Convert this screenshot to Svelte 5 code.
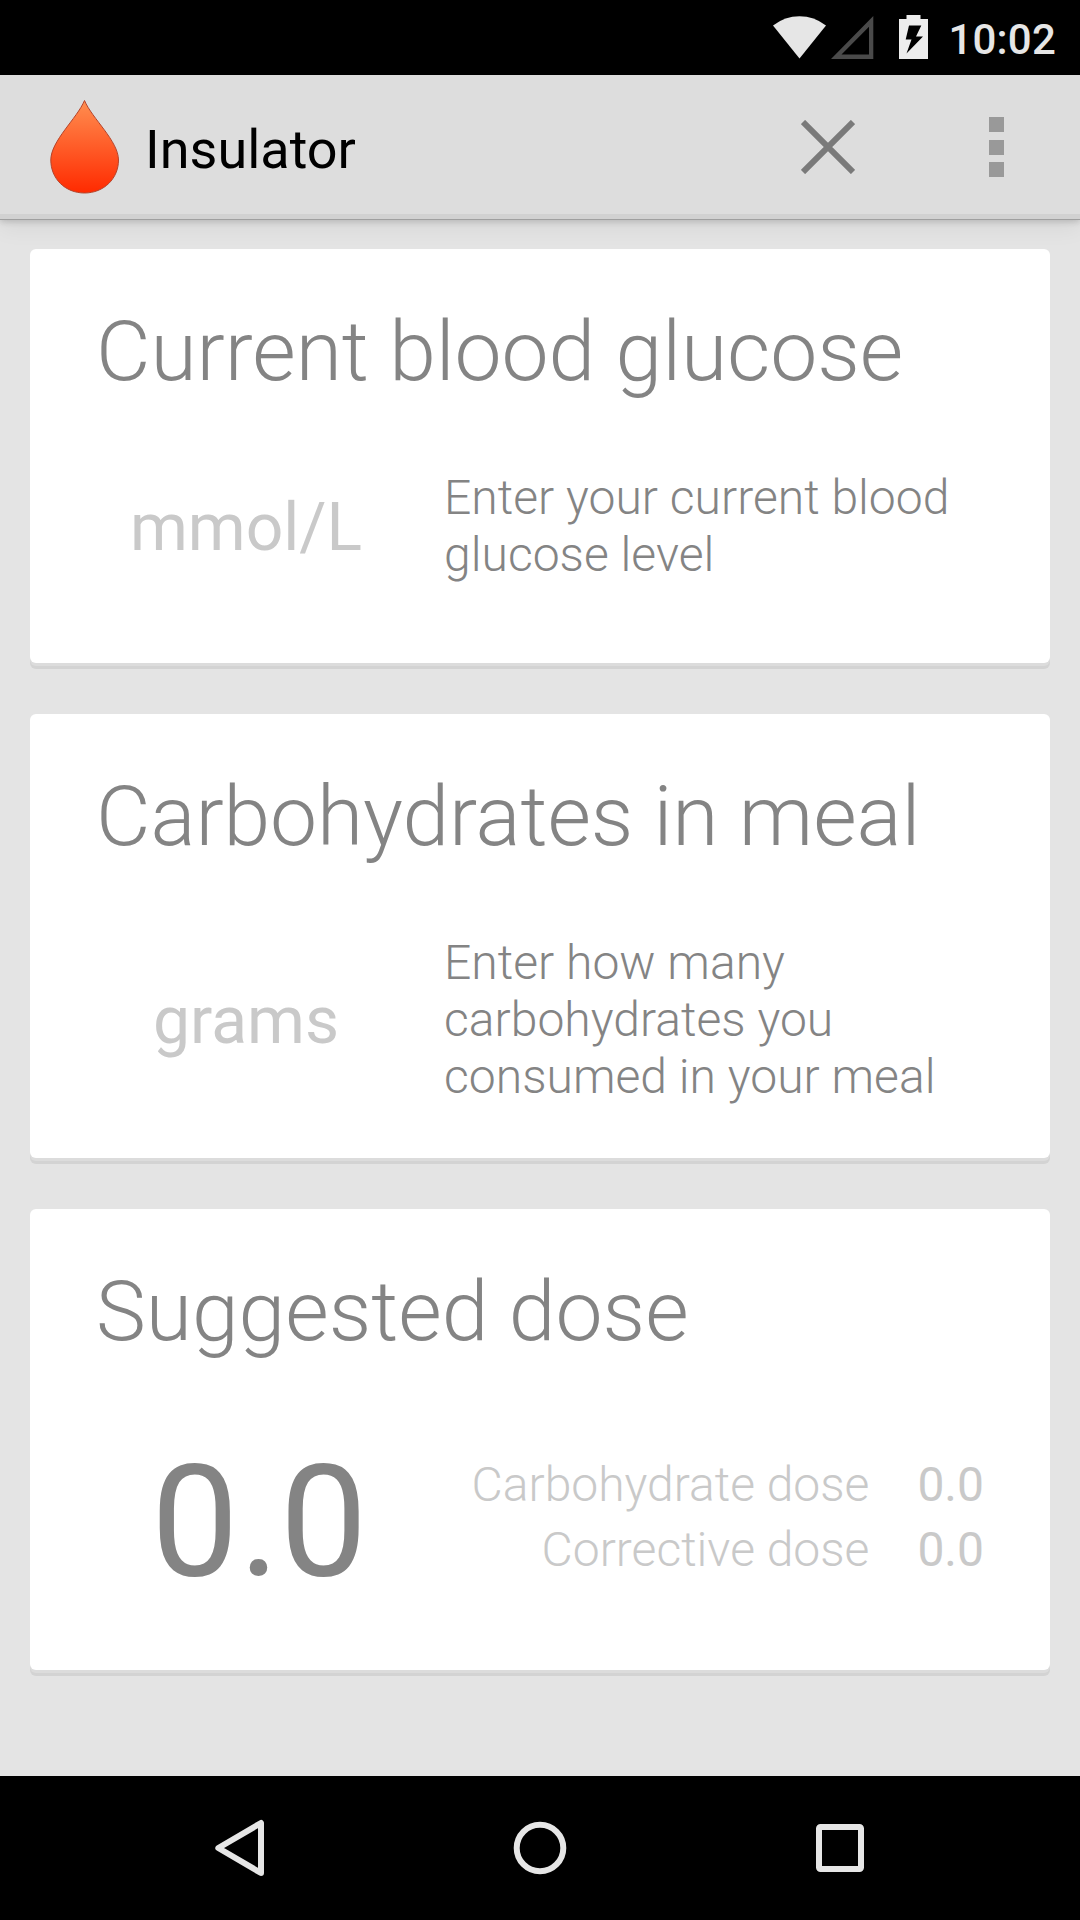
<script>
  const entries = [
    { title: 'Current blood glucose', unit: 'mmol/L', hint: 'Enter your current blood glucose level', size: 'short' },
    { title: 'Carbohydrates in meal', unit: 'grams', hint: 'Enter how many carbohydrates you consumed in your meal', size: 'tall' }
  ];
  const total = '0.0';
  const doses = [
    { label: 'Carbohydrate dose', value: '0.0' },
    { label: 'Corrective dose', value: '0.0' }
  ];
</script>

<div class="screen">
  <div class="status">
    <svg class="wifi" width="53" height="43" viewBox="0 0 53 43"><path d="M0 9.500Q12 .3 26.500 .3T53 9.500L26.500 42.500Z" fill="#e6e6e6" /></svg>
    <svg class="signal" width="43" height="43" viewBox="0 0 43 43"><path d="M0 43L42.300 0V43ZM10.500 38.500H38V10.800Z" fill="#4a4a4a" fill-rule="evenodd" /></svg>
    <svg class="battery" width="29" height="44" viewBox="0 0 29 44"><path d="M7.500 0H21.500V4H29V44H0V4H7.500ZM10 10.500L6.700 24.500H12.500L7.500 38.500L24 21.500H17L22.300 10.500Z" fill="#ededed" fill-rule="evenodd" /></svg>
    <span class="clock">10:02</span>
  </div>

  <header class="bar">
    <svg class="drop" width="70" height="96" viewBox="0 0 70 96">
      <defs>
        <linearGradient id="blood" x1="0" y1="0" x2="0" y2="1">
          <stop offset="0" stop-color="#ff8e50" />
          <stop offset="1" stop-color="#ff2a00" />
        </linearGradient>
      </defs>
      <path d="M34.500 1.500C42 19.500 68.500 42 68.500 61C68.500 79.500 54 94 34.500 94S.8 79.500 .8 61C.8 42 27 19.500 34.500 1.500Z" fill="url(#blood)" stroke="#b5432a" stroke-width="1" />
    </svg>
    <h1>Insulator</h1>
    <svg class="close" width="54" height="54" viewBox="0 0 54 54"><path d="M2 2L52 52M52 2L2 52" stroke="#7a7a7a" stroke-width="6" /></svg>
    <div class="more"><i></i><i></i><i></i></div>
  </header>

  <main>
    {#each entries as entry}
      <section class="card {entry.size}">
        <h2>{entry.title}</h2>
        <div class="entry">
          <span class="unit">{entry.unit}</span>
          <p>{entry.hint}</p>
        </div>
      </section>
    {/each}
    <section class="card result">
      <h2>Suggested dose</h2>
      <div class="summary">
        <span class="total">{total}</span>
        <div class="doses">
          {#each doses as dose}
            <span class="label">{dose.label}</span>
            <span class="value">{dose.value}</span>
          {/each}
        </div>
      </div>
    </section>
  </main>

  <nav>
    <svg width="50" height="58" viewBox="0 0 50 58"><path d="M47 4V54L4.300 29Z" fill="none" stroke="#e6e6e6" stroke-width="6" stroke-linejoin="round" /></svg>
    <svg width="54" height="54" viewBox="0 0 54 54"><circle cx="27" cy="27" r="23.300" fill="none" stroke="#e6e6e6" stroke-width="6" /></svg>
    <svg width="50" height="50" viewBox="0 0 50 50"><rect x="3" y="4" width="42" height="42" rx="1.500" fill="none" stroke="#e6e6e6" stroke-width="6" /></svg>
  </nav>
</div>

<style>
  :global(body) { margin: 0; background: #000; }
  .screen {
    width: 1080px;
    height: 1920px;
    display: flex;
    flex-direction: column;
    overflow: hidden;
    background: #e4e4e4;
    font-family: Roboto, sans-serif;
  }
  svg { display: block; flex: none; }
  h1, h2, p { margin: 0; }

  .status {
    height: 75px;
    flex: none;
    box-sizing: border-box;
    padding: 15px 24px 0 0;
    background: #000;
    display: flex;
    justify-content: flex-end;
    align-items: flex-start;
  }
  .wifi { margin: 1px 5px 0 0; }
  .signal { margin: 1px 25px 0 0; }
  .battery { margin-right: 20px; }
  .clock { font-size: 42px; font-weight: 500; line-height: 49px; letter-spacing: .2px; color: #e6e6e6; }

  .bar {
    height: 145px;
    flex: none;
    box-sizing: border-box;
    padding: 0 76.500px 0 50px;
    border-bottom: 1px solid #9f9f9f;
    background: linear-gradient(#dddddd 139px, #d1d1d1 139px);
    box-shadow: 0 2px 6px rgba(0, 0, 0, .16), 0 10px 20px rgba(0, 0, 0, .05);
    display: flex;
    align-items: center;
  }
  h1 { margin: 6px auto 0 25px; font-size: 54px; font-weight: 400; line-height: 64px; color: #000; }
  .close { margin-right: 133.500px; }
  .more { display: grid; gap: 7.500px; }
  .more i { width: 15px; height: 15px; background: #999; }

  main {
    flex: 1;
    padding: 29px 30px 0;
    display: flex;
    flex-direction: column;
    gap: 51px;
  }
  .card {
    box-sizing: border-box;
    padding: 54px 66px 0;
    border-radius: 6px;
    background: #fff;
    box-shadow: 0 3px 0 #dcdcdc, 0 6px 0 #d3d3d3;
  }
  .short { height: 414px; }
  .tall { height: 444px; }
  .tall h2 { letter-spacing: -.1px; }
  .result { height: 461px; }
  h2 { font-size: 84px; font-weight: 300; line-height: 98px; color: #848484; white-space: nowrap; }
  .short h2 { letter-spacing: -.06px; }
  .entry {
    margin-top: 68px;
    display: grid;
    grid-template-columns: 300px 540px;
    column-gap: 48px;
    align-items: center;
  }
  .unit { padding-top: 2px; font-size: 66px; line-height: 77px; text-align: center; color: #c9c9c9; }
  p { font-size: 48px; font-weight: 300; line-height: 57px; letter-spacing: .03px; color: #848484; }

  .summary { display: flex; justify-content: space-between; }
  .total { margin: 69px 0 0 55px; font-size: 156px; line-height: 183px; color: #848484; }
  .doses {
    margin-top: 91px;
    display: grid;
    grid-template-columns: auto auto;
    column-gap: 48px;
    align-content: start;
    font-size: 48px;
    line-height: 65px;
    color: #c9c9c9;
    text-align: right;
  }
  .label { font-weight: 300; }

  nav {
    height: 144px;
    flex: none;
    padding: 0 214px;
    box-sizing: border-box;
    background: #000;
    display: flex;
    align-items: center;
    justify-content: space-between;
  }
</style>
